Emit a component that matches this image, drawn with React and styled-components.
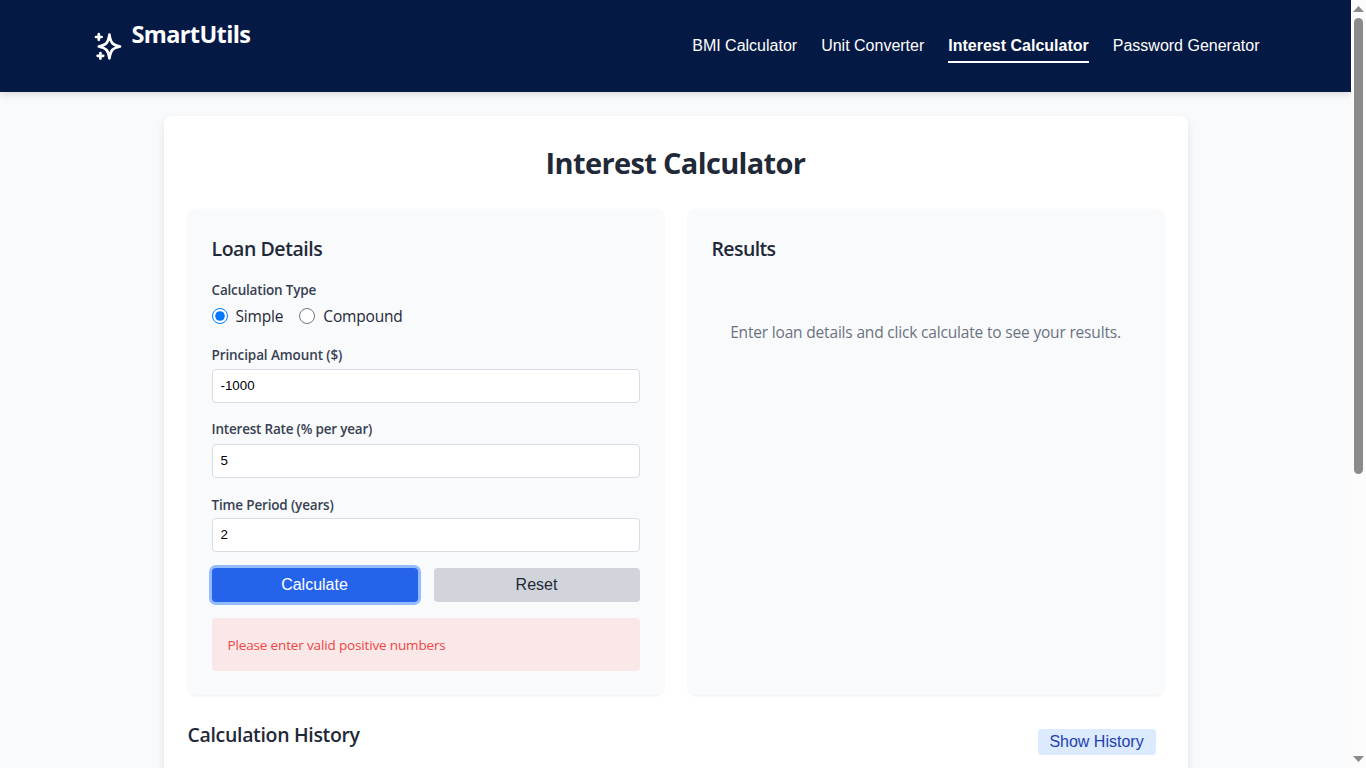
import React, { useState } from "react";
import styled, { createGlobalStyle } from "styled-components";

const GlobalStyle = createGlobalStyle`
  * { box-sizing: border-box; }
  html, body { margin: 0; padding: 0; overflow: hidden; }
  body {
    font-family: "Segoe UI", "Open Sans", "Noto Sans", sans-serif;
    background: #f9fafb;
    color: #1f2937;
  }
  h1, h2, p { margin: 0; }
`;

const Window = styled.div`
  display: flex;
  width: 1366px;
  height: 768px;
  overflow: hidden;
`;

const Page = styled.div`
  flex: 1;
  height: 768px;
  overflow: hidden;
  background: #f9fafc;
`;

const Header = styled.header`
  height: 92px;
  background: #051945;
  box-shadow: 0 2px 8px rgba(0, 0, 0, 0.15);
`;

const HeaderInner = styled.div`
  display: flex;
  justify-content: space-between;
  width: 1200px;
  height: 100%;
  margin: 0 auto;
  padding: 0 16px;
`;

const Brand = styled.div`
  display: flex;
  align-items: flex-start;
  padding-top: 16px;
  color: #fff;
`;

const BrandIcon = styled.svg`
  width: 32px;
  height: 32px;
  margin-top: 14px;
`;

const BrandName = styled.span`
  margin-left: 8px;
  font-size: 23.5px;
  line-height: 36px;
  font-weight: 700;
  letter-spacing: ${(p) => p.$track}px;
`;

const Nav = styled.nav`
  display: flex;
  gap: 24px;
  padding-top: 32px;
`;

const NavLink = styled.a`
  height: 31px;
  padding-top: 4px;
  color: #fff;
  font-family: Arial, "Liberation Sans", sans-serif;
  font-size: 16px;
  line-height: 19px;
  font-weight: ${(p) => (p.$active ? 700 : 400)};
  border-bottom: ${(p) => (p.$active ? "2px solid #fff" : "0")};
  text-decoration: none;
  white-space: nowrap;
`;

const Card = styled.main`
  width: 1024px;
  height: 900px;
  margin: 24px auto 0;
  padding: 24px;
  background: #fff;
  border-radius: 8px;
  box-shadow: 0 4px 8px rgba(0, 0, 0, 0.1);
`;

const Title = styled.h1`
  height: 48px;
  margin-bottom: 21px;
  text-align: center;
  font-size: 29px;
  line-height: 45px;
  font-weight: 700;
  letter-spacing: ${(p) => p.$track}px;
`;

const Columns = styled.div`
  display: grid;
  grid-template-columns: 1fr 1fr;
  gap: 24px;
  height: 486px;
`;

const Panel = styled.section`
  padding: 24px;
  background: #f9fafc;
  border-radius: 8px;
  box-shadow: 0 1px 3px rgba(0, 0, 0, 0.06);
`;

const Heading = styled.h2`
  font-size: 19.5px;
  line-height: 31px;
  font-weight: 600;
  letter-spacing: ${(p) => p.$track}px;
  white-space: nowrap;
`;

const Label = styled.label`
  display: block;
  height: 18px;
  margin-top: ${(p) => p.$top}px;
  color: #374151;
  font-size: 13.5px;
  line-height: 18px;
  font-weight: 600;
  letter-spacing: ${(p) => p.$track}px;
`;

const RadioRow = styled.div`
  display: flex;
  gap: 16px;
  height: 24px;
  margin-top: 5px;
`;

const RadioOption = styled.label`
  display: flex;
  align-items: center;
  gap: 8px;
  font-size: 15.5px;
  line-height: 24px;
  letter-spacing: ${(p) => p.$track}px;
`;

const Radio = styled.input`
  width: 16px;
  height: 16px;
  margin: 0;
`;

const Field = styled.input`
  display: block;
  width: 100%;
  height: 34px;
  margin-top: ${(p) => p.$top}px;
  padding: 7px 8px 9px;
  color: #000;
  background: #fff;
  border: 1px solid #d9dce2;
  border-radius: 4px;
  outline: none;
  font-family: Arial, "Liberation Sans", sans-serif;
  font-size: 13.333px;
`;

const Actions = styled.div`
  display: flex;
  gap: 16px;
  margin-top: 16px;
`;

const Button = styled.button`
  flex: 1;
  height: 34px;
  padding: 0;
  border: 0;
  border-radius: 4px;
  font-family: Arial, "Liberation Sans", sans-serif;
  font-size: 16px;
  line-height: 34px;
  color: ${(p) => (p.$primary ? "#fff" : "#1f2937")};
  background: ${(p) => (p.$primary ? "#2563eb" : "#d1d5db")};
  box-shadow: ${(p) => (p.$primary ? "0 0 0 3px #93bbfd" : "none")};
`;

const ErrorBox = styled.div`
  height: 53px;
  margin-top: 16px;
  padding: 1px 16px 0;
  color: #ef4444;
  background: #fae8e8;
  border-radius: 4px;
  font-size: 13.5px;
  line-height: 53px;
  letter-spacing: ${(p) => p.$track}px;
`;

const EmptyText = styled.p`
  margin-top: 56px;
  color: #6b7280;
  font-size: 15.5px;
  line-height: 24px;
  text-align: center;
  white-space: nowrap;
  letter-spacing: ${(p) => p.$track}px;
`;

const HistoryBar = styled.div`
  display: flex;
  justify-content: space-between;
  align-items: flex-start;
  margin-top: 24px;
  padding-right: 8px;
`;

const HistoryButton = styled.button`
  width: 118px;
  height: 26px;
  margin-top: 10px;
  padding: 0;
  border: 0;
  border-radius: 4px;
  color: #1e40af;
  background: #dbeafe;
  font-family: Arial, "Liberation Sans", sans-serif;
  font-size: 16px;
  line-height: 26px;
`;

const Scrollbar = styled.div`
  display: flex;
  flex-direction: column;
  align-items: center;
  width: 15px;
  height: 768px;
  padding: 6px 0;
  background: #fcfcfc;
`;

const Arrow = styled.svg`
  display: block;
  width: 11px;
  height: 6px;
  fill: #8b8b8b;
`;

const Thumb = styled.div`
  width: 9px;
  height: 456px;
  margin: 6px 0 auto;
  background: #8b8b8b;
  border-radius: 5px;
`;

const links = ["BMI Calculator", "Unit Converter", "Interest Calculator", "Password Generator"];

export default function App() {
  const [type, setType] = useState("simple");
  return (
    <>
      <GlobalStyle />
      <Window>
        <Page>
          <Header>
            <HeaderInner>
              <Brand>
                <BrandIcon viewBox="0 0 32 32" fill="none" stroke="#fff" strokeWidth="2.7" strokeLinecap="round" strokeLinejoin="round">
                  <path d="M17.4 4.6 C18.6 12.8 20.3 14.8 28 16.5 C20.3 18.2 18.6 20.2 17.4 28.4 C16.2 20.2 14.5 18.2 6.8 16.5 C14.5 14.8 16.2 12.8 17.4 4.6Z" />
                  <path d="M6.8 4.2v5.6M4 7h5.6M8.4 23v5.6M5.6 25.8h5.6" />
                </BrandIcon>
                <BrandName $track={-0.63}>SmartUtils</BrandName>
              </Brand>
              <Nav>
                {links.map((name) => (
                  <NavLink key={name} $active={name === "Interest Calculator"}>{name}</NavLink>
                ))}
              </Nav>
            </HeaderInner>
          </Header>
          <Card>
            <Title $track={-0.65}>Interest Calculator</Title>
            <Columns>
              <Panel>
                <Heading $track={-0.45}>Loan Details</Heading>
                <Label $top={17} $track={-0.18}>Calculation Type</Label>
                <RadioRow>
                  <RadioOption $track={-0.17}>
                    <Radio type="radio" name="type" checked={type === "simple"} onChange={() => setType("simple")} />
                    Simple
                  </RadioOption>
                  <RadioOption $track={-0.18}>
                    <Radio type="radio" name="type" checked={type === "compound"} onChange={() => setType("compound")} />
                    Compound
                  </RadioOption>
                </RadioRow>
                <Label $top={18} $track={-0.1}>Principal Amount ($)</Label>
                <Field $top={5} defaultValue="-1000" />
                <Label $top={17} $track={-0.2}>Interest Rate (% per year)</Label>
                <Field $top={6} defaultValue="5" />
                <Label $top={18} $track={-0.16}>Time Period (years)</Label>
                <Field $top={4} defaultValue="2" />
                <Actions>
                  <Button $primary>Calculate</Button>
                  <Button>Reset</Button>
                </Actions>
                <ErrorBox $track={-0.15}>Please enter valid positive numbers</ErrorBox>
              </Panel>
              <Panel>
                <Heading $track={-0.6}>Results</Heading>
                <EmptyText $track={-0.18}>Enter loan details and click calculate to see your results.</EmptyText>
              </Panel>
            </Columns>
            <HistoryBar>
              <Heading $track={-0.33}>Calculation History</Heading>
              <HistoryButton>Show History</HistoryButton>
            </HistoryBar>
          </Card>
        </Page>
        <Scrollbar>
          <Arrow viewBox="0 0 11 6"><path d="M5.5 0 11 6H0Z" /></Arrow>
          <Thumb />
          <Arrow viewBox="0 0 11 6"><path d="M5.5 6 0 0H11Z" /></Arrow>
        </Scrollbar>
      </Window>
    </>
  );
}
